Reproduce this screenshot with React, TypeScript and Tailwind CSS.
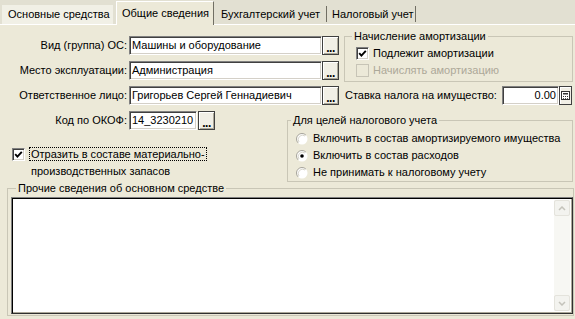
import type { ReactNode } from 'react'

function Input({ width, value, right }: { width: string; value: string; right?: boolean }) {
  return (
    <div
      className={`${width} flex h-[19px] items-center border border-b-white border-l-[#808080] border-r-white border-t-[#808080] bg-white shadow-[inset_1px_1px_0_#404040,inset_-1px_-1px_0_#d4d0c8] ${
        right ? 'justify-end pr-[2px]' : 'pl-[2px]'
      }`}
    >
      <span className="whitespace-nowrap leading-none">{value}</span>
    </div>
  )
}

function DotsButton() {
  return (
    <div className="flex h-[19px] w-[17px] items-end justify-center border border-[#404040] bg-[#f1efe6] pb-[3px] shadow-[inset_1px_1px_0_#fff,inset_-1px_-1px_0_#aca899]">
      <span className="text-[12px] font-bold leading-[6px] tracking-[-0.5px]">...</span>
    </div>
  )
}

function CalcButton() {
  return (
    <div className="flex h-[19px] w-[13px] items-center justify-center border border-[#404040] bg-[#f1efe6] shadow-[inset_1px_1px_0_#fff]">
      <svg width="9" height="9" viewBox="0 0 9 9">
        <rect x="0.5" y="0.5" width="8" height="8" fill="#fff" stroke="#333" />
        <rect x="2" y="2" width="5" height="1.5" fill="#333" />
        <rect x="2" y="5" width="1" height="1" fill="#333" />
        <rect x="4" y="5" width="1" height="1" fill="#333" />
        <rect x="6" y="5" width="1" height="1" fill="#333" />
        <rect x="2" y="7" width="1" height="0.8" fill="#333" />
        <rect x="4" y="7" width="1" height="0.8" fill="#333" />
        <rect x="6" y="7" width="1" height="0.8" fill="#333" />
      </svg>
    </div>
  )
}

function Checkbox({ checked, disabled }: { checked?: boolean; disabled?: boolean }) {
  return (
    <div
      className={`flex h-[13px] w-[13px] shrink-0 items-center justify-center border ${
        disabled
          ? 'border-[#c7c4b6] bg-[#ece9d8]'
          : 'border-b-white border-l-[#808080] border-r-white border-t-[#808080] bg-white shadow-[inset_1px_1px_0_#404040,inset_-1px_-1px_0_#d4d0c8]'
      }`}
    >
      {checked && (
        <svg width="9" height="9" viewBox="0 0 9 9">
          <path d="M1.2 4.2 L3.4 6.6 L7.8 1.8" fill="none" stroke="#000" strokeWidth="1.9" />
        </svg>
      )}
    </div>
  )
}

function Radio({ checked }: { checked?: boolean }) {
  return (
    <svg width="12" height="12" viewBox="0 0 12 12" className="shrink-0">
      <circle cx="6" cy="6" r="5.5" fill="#fff" />
      <path d="M2.1 9.9 A5.5 5.5 0 0 1 9.9 2.1" fill="none" stroke="#a6a49a" strokeWidth="1" />
      <path d="M3 9 A4.3 4.3 0 0 1 9 3" fill="none" stroke="#d8d6cc" strokeWidth="1" />
      {checked && <circle cx="6" cy="6" r="1.8" fill="#000" />}
    </svg>
  )
}

function Group({
  title,
  className,
  legendClass,
  children,
}: {
  title: string
  className: string
  legendClass: string
  children: ReactNode
}) {
  return (
    <fieldset className={`border border-[#c9c6b6] ${className}`}>
      <legend className={`px-[2px] leading-[13px] ${legendClass}`}>{title}</legend>
      {children}
    </fieldset>
  )
}

function FieldRow({ label, children }: { label: string; children: ReactNode }) {
  return (
    <div className="flex h-[19px] items-center">
      <div className="w-[129px] whitespace-nowrap pr-[2px] text-right">{label}</div>
      {children}
    </div>
  )
}

function ScrollArrow({ up }: { up?: boolean }) {
  return (
    <div className="flex h-[16px] w-[16px] items-center justify-center rounded-[2px] border border-[#e4e3dc] bg-[#f3f3ef]">
      <svg width="8" height="5" viewBox="0 0 8 5">
        <path
          d={up ? 'M1 4 L4 1 L7 4' : 'M1 1 L4 4 L7 1'}
          fill="none"
          stroke="#c4c3bb"
          strokeWidth="1.5"
        />
      </svg>
    </div>
  )
}

export default function App() {
  return (
    <div className="flex h-[319px] w-[575px] flex-col overflow-hidden bg-[#ece9d8] font-['Liberation_Sans',Arial,sans-serif] text-[11px] text-black">
      {/* Tabs */}
      <div className="flex h-[25px] shrink-0 items-end border-b border-white bg-[#e2e0d2] pl-[2px]">
        <div className="flex h-[19px] w-[111px] items-center bg-[#f1f0e6] pl-[6px]">Основные средства</div>
        <div className="relative z-10 -mb-px ml-[3px] flex h-[24px] w-[98px] items-center border-l border-t border-white border-r-[#716f64] border-r bg-[#ece9d8] pl-[5px]">
          Общие сведения
        </div>
        <div className="flex h-[19px] w-[112px] items-center pl-[7px]">Бухгалтерский учет</div>
        <div className="mb-[2px] h-[16px] w-px bg-[#716f64]" />
        <div className="flex h-[19px] w-[88px] items-center pl-[5px]">Налоговый учет</div>
        <div className="mb-[2px] h-[16px] w-px bg-[#716f64]" />
      </div>

      {/* Top block */}
      <div className="mt-[5px] flex">
        <div className="mt-[6px] flex w-[340px] flex-col gap-[6px]">
          <FieldRow label="Вид (группа) ОС:">
            <Input width="w-[193px]" value="Машины и оборудование" />
            <DotsButton />
          </FieldRow>
          <FieldRow label="Место эксплуатации:">
            <Input width="w-[193px]" value="Администрация" />
            <DotsButton />
          </FieldRow>
          <FieldRow label="Ответственное лицо:">
            <Input width="w-[193px]" value="Григорьев Сергей Геннадиевич" />
            <DotsButton />
          </FieldRow>
        </div>
        <div className="ml-[4px] flex w-[229px] flex-col">
          <Group title="Начисление амортизации" className="h-[52px] pl-[11px] pt-[2px]" legendClass="ml-[-4px]">
            <div className="flex h-[17px] items-center gap-[4px]">
              <Checkbox checked />
              <span>Подлежит амортизации</span>
            </div>
            <div className="flex h-[17px] items-center gap-[4px]">
              <Checkbox disabled />
              <span className="text-[#aca899]">Начислять амортизацию</span>
            </div>
          </Group>
          <div className="mt-[4px] flex h-[19px] items-center pl-[1px] pr-[1px]">
            <span className="whitespace-nowrap">Ставка налога на имущество:</span>
            <div className="ml-auto flex">
              <Input width="w-[57px]" value="0.00" right />
              <CalcButton />
            </div>
          </div>
        </div>
      </div>

      {/* Middle block */}
      <div className="flex">
        <div className="flex w-[287px] flex-col">
          <div className="mt-[5px] flex h-[20px] items-center">
            <div className="w-[129px] whitespace-nowrap pr-[2px] text-right">Код по ОКОФ:</div>
            <Input width="w-[68px]" value="14_3230210" />
            <div className="ml-[1px]">
              <DotsButton />
            </div>
          </div>
          <div className="mt-[16px] flex items-start gap-[4px] pl-[12px] leading-[17px]">
            <div className="mt-[2px]">
              <Checkbox checked />
            </div>
            <div>
              <span className="border border-dotted border-black px-[1px]">Отразить в составе материально-</span>
              <br />
              <span className="pl-[2px]">производственных запасов</span>
            </div>
          </div>
        </div>
        <Group title="Для целей налогового учета" className="mt-[9px] h-[68px] w-[286px] pl-[8px] pt-[3px]" legendClass="ml-[-5px]">
          <div className="flex h-[17px] items-center gap-[5px]">
            <Radio />
            <span>Включить в состав амортизируемого имущества</span>
          </div>
          <div className="flex h-[17px] items-center gap-[5px]">
            <Radio checked />
            <span>Включить в состав расходов</span>
          </div>
          <div className="flex h-[17px] items-center gap-[5px]">
            <Radio />
            <span>Не принимать к налоговому учету</span>
          </div>
        </Group>
      </div>

      {/* Notes */}
      <Group title="Прочие сведения об основном средстве" className="ml-[7px] w-[567px] pb-[1px] pl-[3px] pt-[2px]" legendClass="ml-[5px]">
        <div className="flex h-[117px] w-[562px] border border-b-[#303030] border-l-[#808080] border-r-[#303030] border-t-[#808080] bg-white shadow-[inset_1px_1px_0_#000,inset_-1px_-1px_0_#aca899]">
          <div className="flex-1" />
          <div className="mb-[2px] mr-[2px] mt-[2px] flex w-[16px] flex-col justify-between bg-[#f7f7f3]">
            <ScrollArrow up />
            <ScrollArrow />
          </div>
        </div>
      </Group>
    </div>
  )
}
